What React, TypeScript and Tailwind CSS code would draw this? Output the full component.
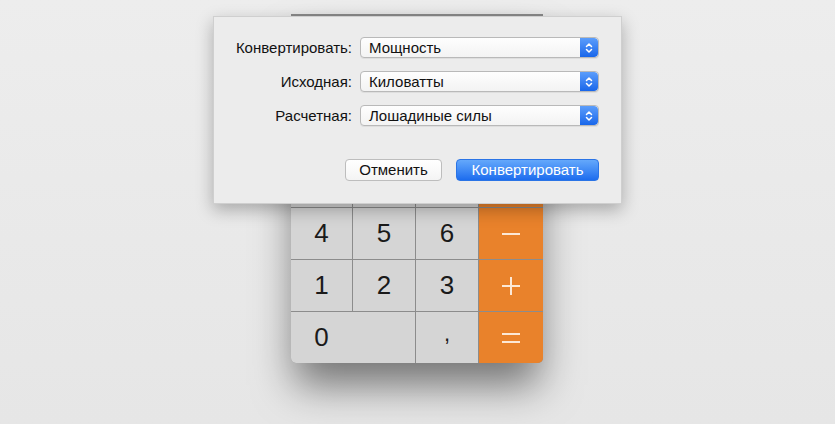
import React from 'react';

const Stepper = () => (
	<span className="w-[18px] h-full rounded-r-[4px] bg-gradient-to-b from-[#5b9dfb] to-[#1766ea] grid place-items-center">
		<svg width="8" height="12" viewBox="0 0 8 12" fill="none" stroke="white" strokeWidth="1.5" strokeLinecap="round" strokeLinejoin="round">
			<path d="M1.5 4.5 L4 2 L6.5 4.5" />
			<path d="M1.5 7.5 L4 10 L6.5 7.5" />
		</svg>
	</span>
);

const Popup = ({ value }: { value: string }) => (
	<div className="w-[239px] h-[21px] flex items-stretch rounded-[4px] border border-[#b9b9b9] bg-gradient-to-b from-[#fefefe] to-[#f3f3f3] shadow-[0_1px_0_rgba(0,0,0,0.06)] overflow-hidden">
		<span className="flex-grow pl-[8px] text-[15px] leading-[19px] text-[#111]">{value}</span>
		<Stepper />
	</div>
);

const rows = [
	{ label: 'Конвертировать:', value: 'Мощность' },
	{ label: 'Исходная:', value: 'Киловатты' },
	{ label: 'Расчетная:', value: 'Лошадиные силы' },
];

const Op = ({ kind }: { kind: 'minus' | 'plus' | 'eq' }) => (
	<svg width="18" height="18" viewBox="0 0 18 18" stroke="#fce8d6" strokeWidth="2">
		{kind === 'minus' && <path d="M0 9 H18" />}
		{kind === 'plus' && <path d="M0 9 H18 M9 0 V18" />}
		{kind === 'eq' && <path d="M0 5 H18 M0 13 H18" />}
	</svg>
);

const Key = ({ children, className = '' }: { children?: React.ReactNode; className?: string }) => (
	<div className={`bg-[#d5d5d5] grid place-items-center text-[26px] text-[#1a1a1a] ${className}`}>
		{children}
	</div>
);

const OrangeKey = ({ children }: { children?: React.ReactNode }) => (
	<div className="bg-[#e9822b] grid place-items-center">{children}</div>
);

const App = () => {
	return (
		<main
			className="relative w-[835px] h-[424px] overflow-hidden bg-gradient-to-b from-[#ededed] to-[#e6e6e6]"
			style={{ fontFamily: '"Liberation Sans", Arial, sans-serif' }}
		>
			{/* calculator behind the sheet, top keys are covered */}
			<div className="ml-[291px] mt-[14px] w-[252px] h-[349px] flex flex-col gap-px bg-[#8c8c8c] rounded-b-[5px] overflow-hidden border-t-2 border-[#8a8a8a] shadow-[0_26px_40px_-4px_rgba(0,0,0,0.5)]">
				<div className="h-[87px] bg-[#5b5b5b]" />
				<div className="grid grid-cols-[61px_62px_62px_64px] auto-rows-[51px] gap-px">
					<Key />
					<Key />
					<Key />
					<OrangeKey />
					<Key />
					<Key />
					<Key />
					<OrangeKey />
					<Key>4</Key>
					<Key>5</Key>
					<Key>6</Key>
					<OrangeKey>
						<Op kind="minus" />
					</OrangeKey>
					<Key>1</Key>
					<Key>2</Key>
					<Key>3</Key>
					<OrangeKey>
						<Op kind="plus" />
					</OrangeKey>
					<Key className="col-span-2 !place-items-start items-center">
						<span className="w-[61px] text-center self-center">0</span>
					</Key>
					<Key>
						<span className="text-[22px] leading-none pb-[8px]">,</span>
					</Key>
					<OrangeKey>
						<Op kind="eq" />
					</OrangeKey>
				</div>
			</div>

			{/* conversion sheet */}
			<div className="absolute left-[213px] top-[16px] w-[409px] h-[188px] bg-[#ececec] border border-[#cfcfcf] shadow-[0_6px_16px_rgba(0,0,0,0.28)] flex flex-col pt-[20px] pr-[22px]">
				<div className="flex flex-col gap-[13px]">
					{rows.map(({ label, value }) => (
						<div key={label} className="flex items-center h-[21px]">
							<span className="w-[138px] text-right text-[15px] leading-[21px] text-[#111]">{label}</span>
							<span className="ml-[8px]">
								<Popup value={value} />
							</span>
						</div>
					))}
				</div>
				<div className="flex justify-end gap-[14px] mt-[33px]">
					<button className="w-[97px] h-[22px] rounded-[4px] border border-[#bdbdbd] bg-gradient-to-b from-[#ffffff] to-[#f4f4f4] text-[15px] leading-[20px] text-[#111]">
						Отменить
					</button>
					<button className="w-[143px] h-[22px] rounded-[4px] border border-[#2a74e6] bg-gradient-to-b from-[#64a8fb] to-[#1c6cee] text-[15px] leading-[20px] text-white">
						Конвертировать
					</button>
				</div>
			</div>
		</main>
	);
};

export default App;
